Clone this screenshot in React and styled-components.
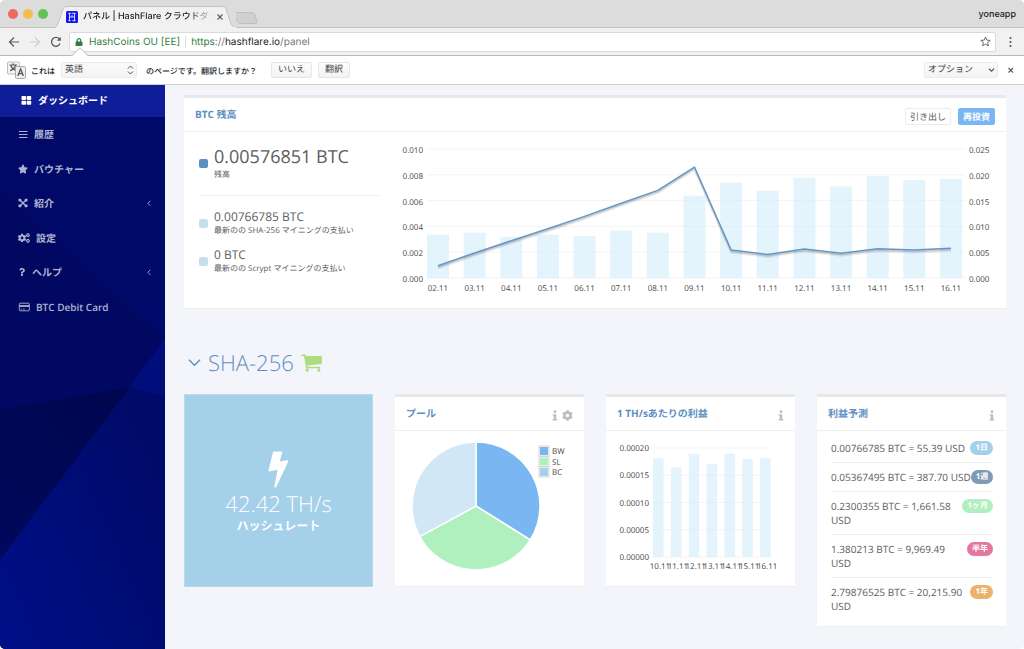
import React from "react";
import styled, { createGlobalStyle } from "styled-components";
import { FaStar, FaCogs, FaQuestion, FaCog, FaLock } from "react-icons/fa";

const GlobalStyle = createGlobalStyle`
  *, *::before, *::after { box-sizing: border-box; }
  body { margin: 0; background: #fff; text-rendering: geometricPrecision; }
  button, select { font: inherit; color: inherit; margin: 0; text-rendering: inherit; }
  h1, h2, p, ul, dl, dd, dt { margin: 0; padding: 0; }
  ul { list-style: none; }
  a { color: inherit; text-decoration: none; }
  svg { display: block; flex: none; }
`;

const uiFont = `Inter, "Noto Sans CJK JP", sans-serif`;
const siteFont = `"Open Sans", "Noto Sans CJK JP", sans-serif`;

/* ---------- browser chrome ---------- */

const Window = styled.div`
  display: flex;
  flex-direction: column;
  min-height: 100vh;
  border-radius: 5px;
  overflow: hidden;
  background: #f3f5fa;
  font-family: ${uiFont};
`;

const TabStrip = styled.header`
  display: flex;
  align-items: flex-end;
  height: 28px;
  padding: 0 8px;
  background: #dcdcdc;
  border-bottom: 1px solid #c2c2c2;
`;

const Lights = styled.div`
  display: flex;
  align-self: center;
  gap: 5px;
  width: 48px;
`;

const Light = styled.span`
  width: 10px;
  height: 10px;
  border-radius: 50%;
  background: ${(p) => p.$color};
`;

const Tab = styled.div`
  position: relative;
  display: flex;
  align-items: center;
  width: 180px;
  height: 22px;
  margin-bottom: -1px;
  padding: 0 9px 0 10px;
`;

const TabShape = styled.svg`
  position: absolute;
  inset: 0;
  width: 100%;
  height: 100%;
`;

const Favicon = styled.svg`
  position: relative;
`;

const TabTitle = styled.span`
  position: relative;
  flex: 1;
  margin-left: 5px;
  overflow: hidden;
  white-space: nowrap;
  font-size: 9px;
  font-weight: 500;
  line-height: 16px;
  color: #222;
  mask-image: linear-gradient(to right, #000 80%, transparent);
`;

const PlainButton = styled.button`
  position: relative;
  display: inline-flex;
  align-items: center;
  justify-content: center;
  padding: 0;
  border: 0;
  background: none;
  color: ${(p) => p.$color || "#5a5a5a"};
  cursor: pointer;
`;

const Profile = styled.button`
  align-self: center;
  margin-left: auto;
  padding: 2px 0 0;
  border: 0;
  background: none;
  && { font-size: 9px; font-weight: 500; }
  line-height: 16px;
  color: #222;
`;

const Toolbar = styled.div`
  display: flex;
  align-items: center;
  gap: 7px;
  height: 28px;
  padding: 0 8px;
  background: #f1f1f1;
  border-bottom: 1px solid #b9b9b9;
`;

const NavButtons = styled.div`
  display: flex;
  gap: 9px;
`;

const AddressBar = styled.div`
  display: flex;
  flex: 1;
  align-items: center;
  height: 20px;
  padding: 0 4px 0 5px;
  border: 1px solid #dadada;
  border-radius: 2px;
  background: #fff;
  color: #2f8140;
  font-size: 10px;
  line-height: 18px;
  white-space: nowrap;
`;

const Identity = styled.span`
  margin-left: 6px;
  padding-right: 5px;
`;

const Url = styled.div`
  flex: 1;
  padding-left: 5px;
  border-left: 1px solid #ddd;
  line-height: 12px;
  color: #2f8140;
  outline: none;
  i { font-style: normal; color: #777; }
  b { font-weight: 400; color: #222; }
`;

const TranslateBar = styled.div`
  position: relative;
  display: flex;
  align-items: center;
  height: 29px;
  padding: 0 10px 0 7px;
  background: #fff;
  border-bottom: 1px solid #cfd0d4;
  font-size: 9px;
  color: #444;
`;

const Notch = styled.svg`
  position: absolute;
  left: 72px;
  top: -9px;
`;

const BarLabel = styled.label`
  margin: 0 6px 0 5px;
  padding-top: 2px;
  font-size: 8px;
  font-weight: 500;
  line-height: 16px;
  color: #222;
  white-space: nowrap;
`;

const BarText = styled.span`
  margin: 0 14px 0 9px;
  padding-top: 2px;
  font-size: 8px;
  font-weight: 500;
  line-height: 16px;
  color: #222;
  white-space: nowrap;
`;

const SelectBox = styled.span`
  position: relative;
  display: inline-block;
  width: ${(p) => p.$width};
  margin-left: ${(p) => (p.$end ? "auto" : "0")};
  svg { position: absolute; right: 3px; top: 3px; pointer-events: none; }
`;

const Select = styled.select`
  appearance: none;
  display: block;
  width: 100%;
  height: 16px;
  padding: 0 3px;
  border: 1px solid #ececec;
  border-radius: 2px;
  background: linear-gradient(#fafafa, #f3f3f3);
  line-height: 14px;
`;

const BarButton = styled.button`
  height: 16px;
  padding: 0 6px;
  border: 1px solid #e6e6e6;
  border-radius: 2px;
  background: linear-gradient(#fcfcfc, #f3f3f3);
  line-height: 14px;
  & + & { margin-left: 6px; }
`;

/* ---------- site shell ---------- */

const Site = styled.div`
  display: flex;
  flex: 1;
  font-family: ${siteFont};
  color: #5c5e60;
`;

const Sidebar = styled.nav`
  position: relative;
  flex: none;
  width: 165px;
  background: #000963;
  color: #aeb3d0;
  font-size: 10px;
`;

const Facets = styled.svg`
  position: absolute;
  inset: 0;
  width: 100%;
  height: 100%;
`;

const NavLink = styled.a`
  position: relative;
  display: flex;
  align-items: center;
  gap: 6px;
  height: ${(p) => (p.$active ? "32px" : "auto")};
  padding: 0 14px ${(p) => (p.$active ? "2px 21px" : "0 18px")};
  background: ${(p) => (p.$active ? "#101d98" : "none")};
  color: ${(p) => (p.$active ? "#fff" : "inherit")};
  font-weight: ${(p) => (p.$latin ? 600 : 700)};
  line-height: 16px;
  svg:last-child { margin-left: auto; }
`;

const NavList = styled.ul`
  position: relative;
  display: grid;
  grid-auto-rows: 1fr;
  height: 207px;
  li { display: grid; }
`;

const Main = styled.main`
  flex: 1;
  min-width: 0;
  padding: 10px 18px 22px 19px;
`;

const Card = styled.section`
  background: #fff;
  border-top: 3px solid #e6e8ec;
  border-bottom: 1px solid #eceef2;
`;

const CardHeader = styled.header`
  display: flex;
  align-items: center;
  justify-content: space-between;
  height: 34px;
  padding: 0 11px;
  border-bottom: 1px solid #eeeff1;
`;

const CardActions = styled.div`
  display: flex;
  align-items: center;
  gap: ${(p) => p.$gap || "4px"};
  padding-top: 3px;
`;

const CardTitle = styled.h2`
  padding-bottom: 2px;
  font-size: 10px;
  font-weight: 700;
  line-height: 16px;
  color: #5c90c2;
  white-space: nowrap;
`;

const SmallButton = styled.button`
  height: 17px;
  padding: 0 4px;
  border: 1px solid ${(p) => (p.$primary ? "#79b6f2" : "#ebebeb")};
  border-radius: 2px;
  background: ${(p) => (p.$primary ? "#79b6f2" : "#fff")};
  color: ${(p) => (p.$primary ? "#fff" : "#5c5e60")};
  && { font-size: 9px; font-weight: ${(p) => (p.$primary ? 600 : 400)}; }
  line-height: 15px;
`;

const BalanceBody = styled.div`
  display: grid;
  grid-template-columns: 181px 1fr;
  gap: 20px;
  padding: 9px 12px 7px 15px;
`;

const Balances = styled.dl`
  padding-top: 4px;
`;

const Balance = styled.div`
  display: grid;
  grid-template-columns: 9px 1fr;
  align-items: center;
  column-gap: 6px;
  margin-bottom: ${(p) => (p.$main ? "13px" : "10px")};
  padding-bottom: ${(p) => (p.$main ? "14px" : "0")};
  border-bottom: ${(p) => (p.$main ? "1px solid #eeeff1" : "0")};
  &::before {
    content: "";
    grid-row: span 2;
    height: 9px;
    border-radius: 2px;
    background: ${(p) => (p.$main ? "#5c90c2" : "#c5dfe9")};
  }
  dt {
    grid-column: 2;
    grid-row: 2;
    font-size: 8px;
    line-height: 12px;
    white-space: nowrap;
  }
  dd {
    grid-column: 2;
    grid-row: 1;
    font-size: ${(p) => (p.$main ? "18px" : "12px")};
    line-height: ${(p) => (p.$main ? "24px" : "16px")};
  }
`;

const Chart = styled.svg`
  width: 100%;
  height: auto;
  font-family: ${siteFont};
  font-size: 8px;
  fill: #484848;
`;

const SectionTitle = styled.h1`
  display: flex;
  align-items: center;
  gap: 7px;
  margin: 38px 0 15px;
  padding-left: 4px;
  font-size: 22px;
  font-weight: 300;
  line-height: 32px;
  color: #5c90c2;
`;

const Cards = styled.div`
  display: grid;
  grid-template-columns: repeat(4, minmax(0, 1fr));
  align-items: start;
  gap: 22px;
`;

const HashTile = styled.section`
  display: flex;
  flex-direction: column;
  align-items: center;
  justify-content: center;
  height: 193px;
  padding-top: 3px;
  border: 1px solid #bcd9ea;
  background: #a5d0ea;
  color: #fff;
`;

const HashRate = styled.p`
  margin-top: 2px;
  font-size: 22px;
  font-weight: 300;
  line-height: 28px;
`;

const HashLabel = styled.p`
  font-size: 12px;
  font-weight: 700;
  line-height: 16px;
`;

const Forecast = styled.ul`
  padding: 3px 13px 6px 14px;
  font-size: 10px;
  line-height: 14px;
`;

const ForecastRow = styled.li`
  display: flex;
  align-items: flex-start;
  justify-content: space-between;
  padding: 7px 0;
  white-space: pre;
  & + & { border-top: 1px solid #eeeff1; }
`;

const Badge = styled.span`
  flex: none;
  padding: 0 5px;
  border-radius: 7px;
  background: ${(p) => p.$color};
  color: #fff;
  font-size: 8px;
  font-weight: 700;
  line-height: 14px;
`;

/* ---------- icons ---------- */

const GridIcon = () => (
  <svg width="11" height="9" viewBox="0 0 11 9" fill="currentColor">
    <rect x=".5" width="4.500" height="4" rx=".8" /><rect x="5.700" width="4.500" height="4" rx=".8" />
    <rect x=".5" y="4.700" width="4.500" height="4" rx=".8" /><rect x="5.700" y="4.700" width="4.500" height="4" rx=".8" />
  </svg>
);

const LinesIcon = () => (
  <svg width="10" height="9" viewBox="0 0 10 9" stroke="currentColor" strokeWidth="1.200">
    <path d="M1 1.500h8.500M1 4.500h8.500M1 7.500h8.500" />
  </svg>
);

const NodesIcon = () => (
  <svg width="10" height="10" viewBox="0 0 10 10" fill="currentColor">
    <path d="M2 2l6 6M8 2L2 8" stroke="currentColor" strokeWidth="1.100" />
    <circle cx="5" cy="5" r="1.300" />
    <rect x=".5" y=".8" width="2.800" height="2.600" rx=".6" /><rect x="6.700" y=".8" width="2.800" height="2.600" rx=".6" />
    <rect x=".5" y="6.600" width="2.800" height="2.600" rx=".6" /><rect x="6.700" y="6.600" width="2.800" height="2.600" rx=".6" />
  </svg>
);

const CardIcon = () => (
  <svg width="12" height="10" viewBox="0 0 12 10" fill="none" stroke="currentColor">
    <rect x="1.300" y="1.200" width="10" height="7.600" rx=".8" strokeWidth=".9" />
    <path d="M1.300 4h10" strokeWidth="1.800" /><path d="M2.800 7.200h1.200M4.800 7.200h2" strokeWidth=".8" />
  </svg>
);

const CaretLeft = () => (
  <svg width="4" height="7" viewBox="0 0 4 7" fill="none" stroke="currentColor" strokeWidth=".9">
    <path d="M3.300.8L.9 3.300l2.400 2.500" />
  </svg>
);

const InfoIcon = () => (
  <svg width="6" height="11" viewBox="0 0 6 11" fill="currentColor">
    <circle cx="3" cy="1.700" r="1.400" />
    <path d="M.8 4.200h3.400v4.900h1v1.500H.6V9.100h1.100V5.700H.8z" />
  </svg>
);

const BoltIcon = () => (
  <svg width="21" height="37" viewBox="0 0 21 37" fill="#fff">
    <path d="M6 .5h7.600q.9 0 .7.900L11.600 10.500l7.900-1.300q1.200 0 .8 1.100L8.400 35.800q-.5.9-1.400.7-.8-.2-.6-1.100L9.600 18.700 1.500 20.400Q.3 20.500.5 19.300L4.900 1.200Q5.100.5 6 .5z" />
  </svg>
);

const CartIcon = () => (
  <svg width="21" height="18" viewBox="0 0 21 18" fill="#b0dc81">
    <path d="M.6.4h3.300q.8 0 .9.700l.1.900L20.200 2q.7 0 .7.700v6.500q0 .6-.7.700L6.300 11.400l.3 1.300h11.800q.7 0 .7.700t-.7.800H5.700q-.7 0-.8-.6L3.100 1.900H.6Q0 1.900 0 1.200T.6.4z" />
    <circle cx="6.300" cy="16.300" r="1.500" /><circle cx="17.900" cy="16.300" r="1.500" />
    <path d="M5.500 13h1.400v3H5.500zM17.200 13h1.400v3h-1.400z" />
  </svg>
);

/* ---------- data ---------- */

const days = ["02.11", "03.11", "04.11", "05.11", "06.11", "07.11", "08.11", "09.11", "10.11", "11.11", "12.11", "13.11", "14.11", "15.11", "16.11"];
const payouts = [0.00839, 0.00878, 0.008, 0.00839, 0.00814, 0.00917, 0.00878, 0.01595, 0.01847, 0.01692, 0.01944, 0.01775, 0.01977, 0.01899, 0.01919];
const balances = [0.00095, 0.00194, 0.00289, 0.00382, 0.00478, 0.0058, 0.00679, 0.0086, 0.00217, 0.00183, 0.00225, 0.00191, 0.00227, 0.00217, 0.0023];
const profits = [0.0001815, 0.0001643, 0.000189, 0.000171, 0.0001895, 0.00018, 0.0001815];

const navItems = [
  { label: "履歴", icon: <LinesIcon /> },
  { label: "バウチャー", icon: <FaStar size={10} /> },
  { label: "紹介", icon: <NodesIcon />, nested: true },
  { label: "設定", icon: <FaCogs size={12} /> },
  { label: "ヘルプ", icon: <FaQuestion size={8} />, nested: true },
  { label: "BTC Debit Card", icon: <CardIcon />, latin: true },
];

const forecasts = [
  { text: "0.00766785 BTC = 55.39 USD", term: "1日", color: "#a5d0ea" },
  { text: "0.05367495 BTC = 387.70 USD", term: "1週", color: "#7f9ab5" },
  { text: "0.2300355 BTC = 1,661.58\nUSD", term: "1ヶ月", color: "#b0f0be" },
  { text: "1.380213 BTC = 9,969.49\nUSD", term: "半年", color: "#e3779f" },
  { text: "2.79876525 BTC = 20,215.90\nUSD", term: "1年", color: "#edb26a" },
];

const pools = [
  { name: "BW", from: 0, to: 122, fill: "#79b6f2", swatch: "#79b6f2" },
  { name: "SL", from: 122, to: 241.5, fill: "#b0f0be", swatch: "#b0f0be" },
  { name: "BC", from: 241.5, to: 360, fill: "#d2e7f5", swatch: "#a5d0ea" },
];

/* ---------- charts ---------- */

function BalanceChart() {
  const top = 8;
  const height = 129;
  const bottom = top + height;
  const pitch = 36.64;
  const points = balances
    .map((v, i) => `${38 + i * pitch},${bottom - (v / 0.01) * height}`)
    .join(" ");
  return (
    <Chart viewBox="0 0 594 160" role="img" aria-label="BTC 残高">
      {[0, 1, 2, 3, 4, 5].map((n) => {
        const y = bottom - (n * height) / 5;
        return (
          <g key={n}>
            <path d={`M27 ${y}H565`} stroke="#f3f3f3" />
            <text x="23" y={y + 4} textAnchor="end">{(n * 0.002).toFixed(3)}</text>
            <text x="569" y={y + 4}>{(n * 0.005).toFixed(3)}</text>
          </g>
        );
      })}
      {payouts.map((v, i) => {
        const h = (v / 0.025) * height;
        return (
          <g key={days[i]}>
            <rect x={27 + i * pitch} y={bottom - h} width="22" height={h} fill="#d6eefb" fillOpacity=".65" />
            <text x={38 + i * pitch} y="150" textAnchor="middle">{days[i]}</text>
          </g>
        );
      })}
      <g fill="none" strokeLinejoin="round">
        <polyline points={points} stroke="#000" strokeOpacity=".08" strokeWidth="3" transform="translate(0 2)" />
        <polyline points={points} stroke="#000" strokeOpacity=".14" strokeWidth="1.500" transform="translate(0 1.500)" />
        <polyline points={points} stroke="#6296c6" strokeWidth="1.500" />
      </g>
    </Chart>
  );
}

function ProfitChart() {
  const height = 109;
  const bottom = 126;
  const pitch = 17.85;
  return (
    <Chart viewBox="0 0 189 155" role="img" aria-label="1 TH/sあたりの利益">
      {[0, 1, 2, 3, 4].map((n) => {
        const y = bottom - (n * height) / 4;
        return (
          <g key={n}>
            <path d={`M47 ${y}H165`} stroke="#f3f3f3" />
            <text x="43" y={y + 3} textAnchor="end">{(n * 0.00005).toFixed(5)}</text>
          </g>
        );
      })}
      {profits.map((v, i) => {
        const h = (v / 0.0002) * height;
        return (
          <g key={i}>
            <rect x={47 + i * pitch} y={bottom - h} width="10.600" height={h} fill="#d6eefb" fillOpacity=".65" />
            <text x={54 + i * pitch} y="138" textAnchor="middle">{days[i + 8]}</text>
          </g>
        );
      })}
    </Chart>
  );
}

function PoolChart() {
  const cx = 81;
  const cy = 75;
  const r = 64;
  const at = (deg) => {
    const a = (deg * Math.PI) / 180;
    return `${cx + r * Math.sin(a)} ${cy - r * Math.cos(a)}`;
  };
  return (
    <Chart viewBox="0 0 189 155" role="img" aria-label="プール">
      {pools.map((p, i) => (
        <g key={p.name}>
          <path d={`M${cx} ${cy}L${at(p.from)}A${r} ${r} 0 0 1 ${at(p.to)}Z`} fill={p.fill} stroke="#fff" strokeWidth="1.500" />
          <rect x="144" y={15 + i * 10.500} width="10" height="10" fill="#fff" stroke="#d4d4d4" />
          <rect x="145" y={16 + i * 10.500} width="8" height="8" fill={p.swatch} />
          <text x="157" y={23 + i * 10.500} fontSize="8">{p.name}</text>
        </g>
      ))}
    </Chart>
  );
}

/* ---------- page ---------- */

function BrowserChrome() {
  return (
    <>
      <TabStrip>
        <Lights>
          <Light $color="#ee6a5e" /><Light $color="#f5bd4f" /><Light $color="#61c454" />
        </Lights>
        <Tab>
          <TabShape viewBox="0 0 180 22" preserveAspectRatio="none">
            <path d="M-2 22Q1 21 2 18L7 3Q8 .5 10 .5H167Q169 .5 170 3L175 18Q176 21 180 22z" fill="#f1f1f1" stroke="#bdbdbd" strokeWidth=".8" />
            <path d="M-2 22H180" stroke="#f1f1f1" strokeWidth="2" />
          </TabShape>
          <Favicon width="12" height="12" viewBox="0 0 12 12">
            <rect width="12" height="12" rx="1.500" fill="#1414ee" />
            <path d="M2.300 2.300h3M3.500 2.300v7.400M2.300 9.700h2.400M3.500 6h5M8.500 2.300v7.400M6.300 9.700h3.400M6 2.300h3.700M6 4v2" fill="none" stroke="#fff" strokeWidth=".8" />
          </Favicon>
          <TabTitle>パネル | HashFlare クラウドダッシュボード</TabTitle>
          <PlainButton aria-label="タブを閉じる">
            <svg width="14" height="8" viewBox="0 0 14 8" stroke="currentColor" strokeWidth="1.100"><path d="M4.500 1.500l5 5M9.500 1.500l-5 5" /></svg>
          </PlainButton>
        </Tab>
        <PlainButton aria-label="新しいタブ">
          <svg width="22" height="15" viewBox="0 0 22 15"><path d="M-1.500 .5H15.500Q18 .5 19 2.500L21.300 9.500Q21.800 11.500 20 11.500H6Q4 11.500 3 9.500L-1.500 .5z" transform="translate(-2 0) scale(1.080 1)" fill="#d0d0d0" stroke="#b9b9b9" strokeWidth=".8" /></svg>
        </PlainButton>
        <Profile>yoneapp</Profile>
      </TabStrip>
      <Toolbar>
        <NavButtons>
          <PlainButton aria-label="戻る">
            <svg width="12" height="12" viewBox="0 0 12 12" fill="none" stroke="currentColor" strokeWidth="1.200"><path d="M11 6H1.500M6 1.500L1.500 6 6 10.500" /></svg>
          </PlainButton>
          <PlainButton aria-label="進む" $color="#cdcdcd">
            <svg width="12" height="12" viewBox="0 0 12 12" fill="none" stroke="currentColor" strokeWidth="1.200"><path d="M1 6h9.500M6 1.500L10.500 6 6 10.500" /></svg>
          </PlainButton>
          <PlainButton aria-label="再読み込み">
            <svg width="12" height="12" viewBox="0 0 12 12" fill="none" stroke="currentColor" strokeWidth="1.300"><path d="M10 7.500A4.400 4.400 0 1 1 9.300 3" /><path d="M10.800.8v4h-4z" fill="currentColor" stroke="none" /></svg>
          </PlainButton>
        </NavButtons>
        <AddressBar>
          <FaLock size={8} />
          <Identity>HashCoins OU [EE]</Identity>
          <Url role="textbox" aria-label="アドレス" contentEditable suppressContentEditableWarning>
            https<i>://</i><b>hashflare.io</b><i>/panel</i>
          </Url>
          <PlainButton aria-label="ブックマーク">
            <svg width="11" height="11" viewBox="0 0 11 11" fill="none" stroke="currentColor" strokeWidth=".9"><path d="M5.500 1l1.300 3.100 3.400.3-2.600 2.200.8 3.300-2.900-1.800-2.900 1.800.8-3.300L.8 4.400l3.400-.3z" /></svg>
          </PlainButton>
        </AddressBar>
        <PlainButton aria-label="メニュー">
          <svg width="13" height="12" viewBox="0 0 13 12" fill="currentColor"><circle cx="7.500" cy="2" r="1.100" /><circle cx="7.500" cy="6" r="1.100" /><circle cx="7.500" cy="10" r="1.100" /></svg>
        </PlainButton>
      </Toolbar>
      <TranslateBar>
        <Notch width="16" height="10" viewBox="0 0 16 10"><path d="M0 9L8 .8 16 9v1H0z" fill="#fff" /><path d="M0 8.500L8 .8l8 7.700" fill="none" stroke="#b9b9b9" /></Notch>
        <svg width="19" height="18" viewBox="0 0 19 18" fill="none" stroke="#555">
          <rect x=".5" y="1" width="12" height="12" rx="1" fill="#f4f4f4" stroke="#bbb" />
          <path d="M2.500 4h7.500M6.200 2.300V4M3.800 4.500Q5.500 8.500 9.500 9.800M8.800 4.500Q7 8.500 3 9.800" strokeWidth="1.100" />
          <rect x="8.500" y="5.500" width="10" height="12" rx="1" fill="#eee" stroke="#aaa" />
          <path d="M10.800 15L13.600 8l2.800 7M11.800 12.700h3.600" strokeWidth="1.300" />
        </svg>
        <BarLabel htmlFor="lang">これは</BarLabel>
        <SelectBox $width="76px">
          <Select id="lang"><option>英語</option></Select>
          <svg width="7" height="10" viewBox="0 0 7 10" fill="none" stroke="#555"><path d="M1 3.500L3.500 1 6 3.500M1 6.500L3.500 9 6 6.500" /></svg>
        </SelectBox>
        <BarText>のページです。翻訳しますか？</BarText>
        <BarButton>いいえ</BarButton>
        <BarButton>翻訳</BarButton>
        <SelectBox $width="74px" $end>
          <Select aria-label="オプション"><option>オプション</option></Select>
          <svg width="7" height="10" viewBox="0 0 7 10" fill="none" stroke="#555" strokeWidth="1.200"><path d="M1 3.800L3.500 6.200 6 3.800" /></svg>
        </SelectBox>
        <PlainButton aria-label="閉じる">
          <svg width="16" height="8" viewBox="0 0 16 8" stroke="currentColor" strokeWidth="1.100"><path d="M10.500 2l4.500 4.500M15 2l-4.500 4.500" /></svg>
        </PlainButton>
      </TranslateBar>
    </>
  );
}

export default function App() {
  return (
    <Window>
      <GlobalStyle />
      <BrowserChrome />
      <Site>
        <Sidebar>
          <Facets viewBox="0 0 165 564" preserveAspectRatio="none" aria-hidden="true">
            <defs>
              <linearGradient id="low" x1="0" y1="1" x2="1" y2="0.300">
                <stop offset="0" stopColor="#000f88" /><stop offset="1" stopColor="#000a68" />
              </linearGradient>
              <linearGradient id="shade" x1="1" y1="0" x2="0" y2="1">
                <stop offset="0" stopColor="#00064c" /><stop offset="1" stopColor="#00085c" />
              </linearGradient>
              <linearGradient id="upper" x1="0" y1="0" x2="1" y2="1">
                <stop offset="0" stopColor="#000966" /><stop offset="1" stopColor="#000a6a" />
              </linearGradient>
            </defs>
            <path d="M0 0H165V253L0 105z" fill="url(#upper)" />
            <path d="M0 105L165 253 130 302 10 323 0 325z" fill="#000861" />
            <path d="M0 325L10 323 130 302 0 475z" fill="url(#shade)" />
            <path d="M165 253V312L130 302z" fill="#000e7c" />
            <path d="M130 302L165 312V564H0V475z" fill="url(#low)" />
          </Facets>
          <NavLink href="#dashboard" $active aria-current="page">
            <GridIcon /><span>ダッシュボード</span>
          </NavLink>
          <NavList>
            {navItems.map((item) => (
              <li key={item.label}>
                <NavLink href="#" $latin={item.latin}>
                  {item.icon}<span>{item.label}</span>{item.nested && <CaretLeft />}
                </NavLink>
              </li>
            ))}
          </NavList>
        </Sidebar>
        <Main>
          <Card>
            <CardHeader>
              <CardTitle>BTC 残高</CardTitle>
              <CardActions $gap="7px">
                <SmallButton>引き出し</SmallButton>
                <SmallButton $primary>再投資</SmallButton>
              </CardActions>
            </CardHeader>
            <BalanceBody>
              <Balances>
                <Balance $main><dt>残高</dt><dd>0.00576851 BTC</dd></Balance>
                <Balance><dt>最新のの SHA-256 マイニングの支払い</dt><dd>0.00766785 BTC</dd></Balance>
                <Balance><dt>最新のの Scrypt マイニングの支払い</dt><dd>0 BTC</dd></Balance>
              </Balances>
              <BalanceChart />
            </BalanceBody>
          </Card>
          <SectionTitle>
            <svg width="13" height="10" viewBox="0 0 14 10" fill="none" stroke="currentColor" strokeWidth="1.500"><path d="M1 1.500L7 7.500 13 1.500" /></svg>
            SHA-256
            <CartIcon />
          </SectionTitle>
          <Cards>
            <HashTile>
              <BoltIcon />
              <HashRate>42.42 TH/s</HashRate>
              <HashLabel>ハッシュレート</HashLabel>
            </HashTile>
            <Card>
              <CardHeader>
                <CardTitle>プール</CardTitle>
                <CardActions>
                  <PlainButton $color="#bdbdbd" aria-label="情報"><InfoIcon /></PlainButton>
                  <PlainButton $color="#bdbdbd" aria-label="プール設定"><FaCog size={11} /></PlainButton>
                </CardActions>
              </CardHeader>
              <PoolChart />
            </Card>
            <Card>
              <CardHeader>
                <CardTitle>1 TH/sあたりの利益</CardTitle>
                <CardActions>
                  <PlainButton $color="#bdbdbd" aria-label="情報"><InfoIcon /></PlainButton>
                </CardActions>
              </CardHeader>
              <ProfitChart />
            </Card>
            <Card>
              <CardHeader>
                <CardTitle>利益予測</CardTitle>
                <CardActions>
                  <PlainButton $color="#bdbdbd" aria-label="情報"><InfoIcon /></PlainButton>
                </CardActions>
              </CardHeader>
              <Forecast>
                {forecasts.map((f) => (
                  <ForecastRow key={f.term}>
                    <span>{f.text}</span>
                    <Badge $color={f.color}>{f.term}</Badge>
                  </ForecastRow>
                ))}
              </Forecast>
            </Card>
          </Cards>
        </Main>
      </Site>
    </Window>
  );
}
